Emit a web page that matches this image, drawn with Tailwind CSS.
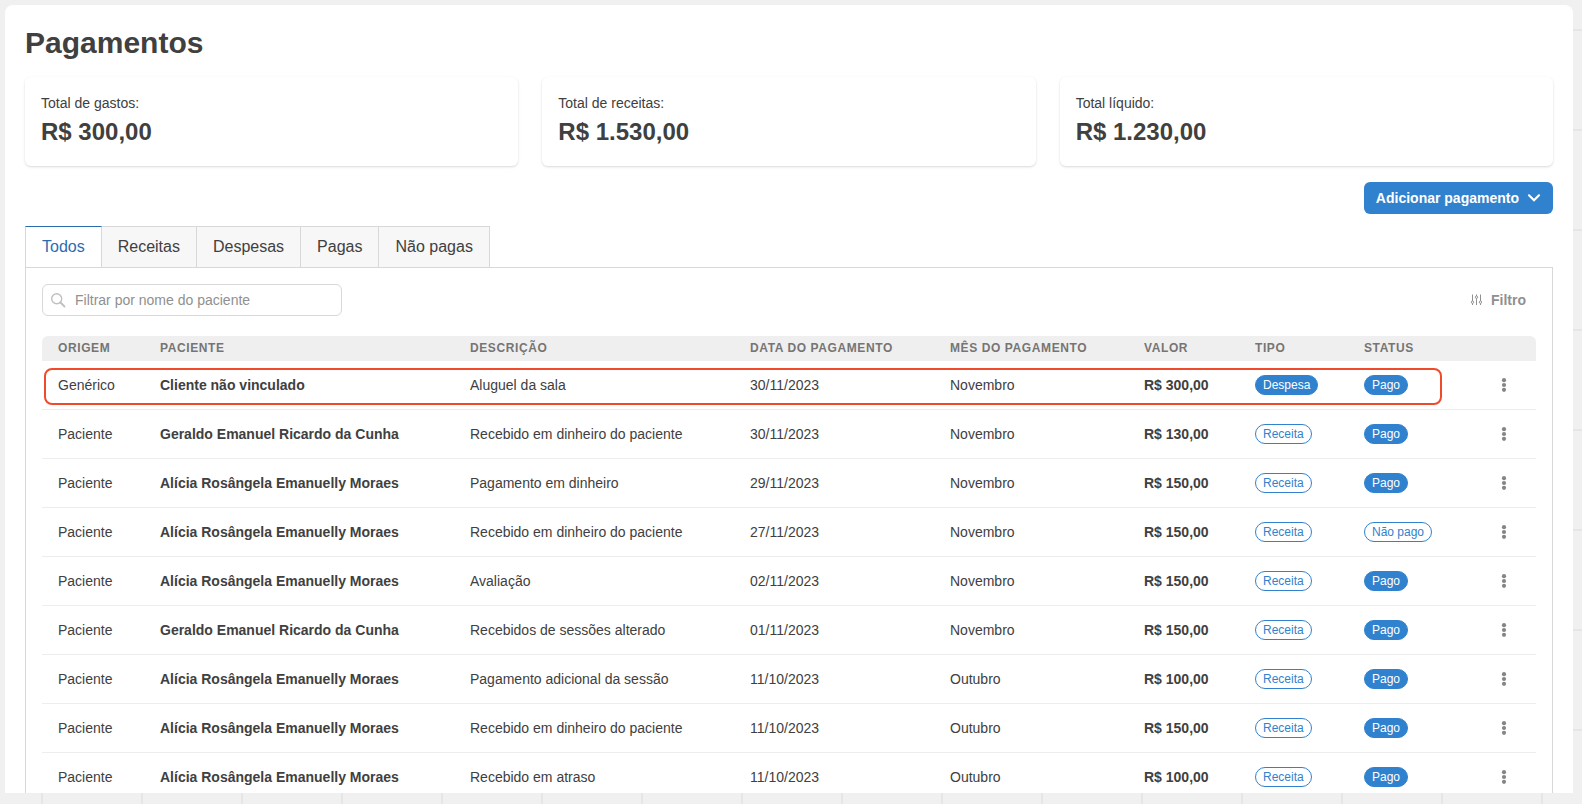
<!DOCTYPE html>
<html lang="pt-BR">
<head>
<meta charset="utf-8">
<title>Pagamentos</title>
<script src="https://cdn.jsdelivr.net/npm/@tailwindcss/browser@4"></script>
</head>
<body class="h-screen overflow-hidden bg-[#f0f0f0] font-['Liberation_Sans',Arial,sans-serif] text-sm text-[#404040]">
<svg class="absolute inset-0 -z-10 h-full w-full" aria-hidden="true">
  <defs><pattern id="grid" x="41" y="29" width="100" height="100" patternUnits="userSpaceOnUse"><path d="M0 0h100v2H2v98H0z" fill="#e6e6e6"/></pattern></defs>
  <rect x="5" y="8" width="100%" height="100%" fill="url(#grid)"/>
</svg>
<div class="h-full pt-[5px] pr-[9px] pb-[11px] pl-[5px]">
<main class="h-full overflow-hidden rounded-t-lg bg-white p-5">
  <h1 class="text-[30px] leading-9 font-bold">Pagamentos</h1>
  <section class="mt-4 grid grid-cols-3 gap-6">
    <div class="rounded-md p-4 shadow-[0_1px_3px_rgba(0,0,0,0.1),0_1px_2px_rgba(0,0,0,0.06)]"><p class="leading-[21px]">Total de gastos:</p><p class="text-2xl leading-9 font-bold">R$ 300,00</p></div>
    <div class="rounded-md p-4 shadow-[0_1px_3px_rgba(0,0,0,0.1),0_1px_2px_rgba(0,0,0,0.06)]"><p class="leading-[21px]">Total de receitas:</p><p class="text-2xl leading-9 font-bold">R$ 1.530,00</p></div>
    <div class="rounded-md p-4 shadow-[0_1px_3px_rgba(0,0,0,0.1),0_1px_2px_rgba(0,0,0,0.06)]"><p class="leading-[21px]">Total líquido:</p><p class="text-2xl leading-9 font-bold">R$ 1.230,00</p></div>
  </section>
  <div class="mt-4 flex justify-end">
    <button class="flex h-8 items-center gap-2 rounded-md bg-[#3182ce] px-3 font-bold text-white">Adicionar pagamento
      <svg class="h-4 w-[14px]" viewBox="0 0 14 16" fill="none" stroke="currentColor" stroke-width="2.2" stroke-linecap="round" stroke-linejoin="miter"><path d="M2 5.3l5 5 5-5"/></svg>
    </button>
  </div>
  <nav class="mt-3 flex text-base" role="tablist">
    <button role="tab" aria-selected="true" class="h-[41px] border-x border-t border-[#d8d8d8] border-t-[#2b6cb0] bg-white px-4 text-[#2b6cb0]">Todos</button>
    <button role="tab" class="h-[41px] border-t border-r border-[#d8d8d8] bg-[#f7f7f7] px-4">Receitas</button>
    <button role="tab" class="h-[41px] border-t border-r border-[#d8d8d8] bg-[#f7f7f7] px-4">Despesas</button>
    <button role="tab" class="h-[41px] border-t border-r border-[#d8d8d8] bg-[#f7f7f7] px-4">Pagas</button>
    <button role="tab" class="h-[41px] border-t border-r border-[#d8d8d8] bg-[#f7f7f7] px-4">Não pagas</button>
  </nav>
  <section class="border border-[#d8d8d8] p-4">
    <div class="flex items-center justify-between">
      <label class="flex h-8 w-[300px] items-center gap-[9px] rounded-md border border-[#d8d8d8] px-[7px]">
        <svg class="h-4 w-4 shrink-0" viewBox="0 0 16 16" fill="none" stroke="#c0c0c0" stroke-width="1.4" stroke-linecap="round" aria-hidden="true"><circle cx="6.7" cy="6.7" r="5"/><path d="M10.5 10.5l4 4" stroke-width="1.8"/></svg>
        <input type="text" aria-label="Filtrar por nome do paciente" placeholder="Filtrar por nome do paciente" class="w-full bg-transparent outline-none placeholder:text-[#909090]">
      </label>
      <button class="mr-[10px] flex items-center gap-[9px] font-bold text-[#909090]">
        <svg class="h-3 w-3" viewBox="0 0 12 12" fill="none" stroke="currentColor" stroke-width="1" aria-hidden="true"><path d="M2.5 0.5V7M2.5 9.5v1.5M6.5 0.5V2M6.5 4.5V11M10.5 0.5V7M10.5 9.5v1.5"/><circle cx="2.5" cy="8.2" r="1.2"/><circle cx="6.5" cy="3.2" r="1.2"/><circle cx="10.5" cy="8.2" r="1.2"/></svg>
        Filtro
      </button>
    </div>
    <div class="relative mt-5">
      <table class="w-full table-fixed border-separate border-spacing-0 text-left">
        <colgroup><col class="w-[102px]"><col class="w-[310px]"><col><col class="w-[200px]"><col class="w-[194px]"><col class="w-[111px]"><col class="w-[109px]"><col class="w-[124px]"><col class="w-16"></colgroup>
        <thead class="text-xs tracking-wider text-[#757575]">
          <tr class="h-[25px] *:bg-[#efefef] *:px-4 *:pb-px">
            <th class="rounded-tl-md">ORIGEM</th><th>PACIENTE</th><th>DESCRIÇÃO</th><th>DATA DO PAGAMENTO</th><th>MÊS DO PAGAMENTO</th><th>VALOR</th><th>TIPO</th><th>STATUS</th><th class="rounded-tr-md" aria-label="Ações"></th>
          </tr>
        </thead>
        <tbody id="rows"></tbody>
      </table>
      <div class="pointer-events-none absolute top-8 right-[94px] left-0.5 h-[37px] rounded-lg border-2 border-[#f04a2a]"></div>
    </div>
  </section>
</main>
</div>
<script>
const G = 'Geraldo Emanuel Ricardo da Cunha', A = 'Alícia Rosângela Emanuelly Moraes';
const rows = [
  ['Genérico', 'Cliente não vinculado', 'Aluguel da sala', '30/11/2023', 'Novembro', '300,00', 'Despesa', 'Pago'],
  ['Paciente', G, 'Recebido em dinheiro do paciente', '30/11/2023', 'Novembro', '130,00', 'Receita', 'Pago'],
  ['Paciente', A, 'Pagamento em dinheiro', '29/11/2023', 'Novembro', '150,00', 'Receita', 'Pago'],
  ['Paciente', A, 'Recebido em dinheiro do paciente', '27/11/2023', 'Novembro', '150,00', 'Receita', 'Não pago'],
  ['Paciente', A, 'Avaliação', '02/11/2023', 'Novembro', '150,00', 'Receita', 'Pago'],
  ['Paciente', G, 'Recebidos de sessões alterado', '01/11/2023', 'Novembro', '150,00', 'Receita', 'Pago'],
  ['Paciente', A, 'Pagamento adicional da sessão', '11/10/2023', 'Outubro', '100,00', 'Receita', 'Pago'],
  ['Paciente', A, 'Recebido em dinheiro do paciente', '11/10/2023', 'Outubro', '150,00', 'Receita', 'Pago'],
  ['Paciente', A, 'Recebido em atraso', '11/10/2023', 'Outubro', '100,00', 'Receita', 'Pago'],
];
const solid = 'bg-[#3182ce] text-white', outline = 'bg-white text-[#3182ce]';
const badge = t => `<span class="flex h-5 w-fit items-center rounded-full border border-[#3182ce] px-[7px] text-xs ${t === 'Despesa' || t === 'Pago' ? solid : outline}">${t}</span>`;
document.getElementById('rows').innerHTML = rows.map(r => `<tr class="h-[49px] whitespace-nowrap *:border-b *:border-[#ededed] *:px-4">
  <td>${r[0]}</td><td class="font-bold">${r[1]}</td><td>${r[2]}</td><td>${r[3]}</td><td>${r[4]}</td><td class="font-bold">R$ ${r[5]}</td><td>${badge(r[6])}</td><td>${badge(r[7])}</td>
  <td><button aria-label="Mais opções" class="flex h-8 w-8 items-center justify-center"><svg class="h-4 w-4" viewBox="0 0 16 16" fill="#858585"><circle cx="8" cy="3.2" r="2.1"/><circle cx="8" cy="8" r="2.1"/><circle cx="8" cy="12.8" r="2.1"/></svg></button></td></tr>`).join('');
</script>
</body>
</html>
